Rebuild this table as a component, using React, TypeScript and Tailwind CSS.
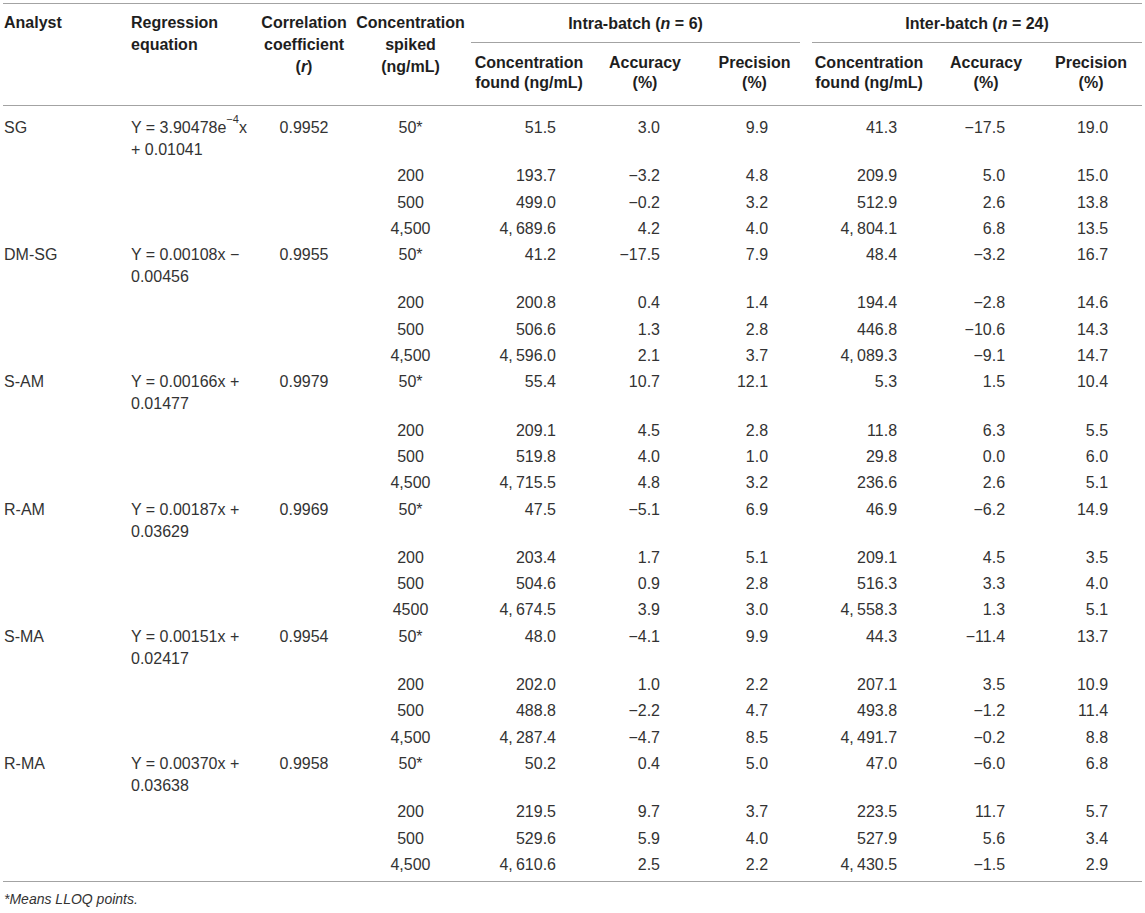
const rows = [
  {
    analyst: 'SG',
    eq: (
      <>
        Y = 3.90478e<sup className="text-[11px] align-[5px] leading-none">−4</sup>x
        <br />+ 0.01041
      </>
    ),
    r: '0.9952',
    data: [
      ['50*', '51.5', '3.0', '9.9', '41.3', '−17.5', '19.0'],
      ['200', '193.7', '−3.2', '4.8', '209.9', '5.0', '15.0'],
      ['500', '499.0', '−0.2', '3.2', '512.9', '2.6', '13.8'],
      ['4,500', '4,\u2009689.6', '4.2', '4.0', '4,\u2009804.1', '6.8', '13.5'],
    ],
  },
  {
    analyst: 'DM-SG',
    eq: (
      <>
        Y = 0.00108x −<br />
        0.00456
      </>
    ),
    r: '0.9955',
    data: [
      ['50*', '41.2', '−17.5', '7.9', '48.4', '−3.2', '16.7'],
      ['200', '200.8', '0.4', '1.4', '194.4', '−2.8', '14.6'],
      ['500', '506.6', '1.3', '2.8', '446.8', '−10.6', '14.3'],
      ['4,500', '4,\u2009596.0', '2.1', '3.7', '4,\u2009089.3', '−9.1', '14.7'],
    ],
  },
  {
    analyst: 'S-AM',
    eq: (
      <>
        Y = 0.00166x +<br />
        0.01477
      </>
    ),
    r: '0.9979',
    data: [
      ['50*', '55.4', '10.7', '12.1', '5.3', '1.5', '10.4'],
      ['200', '209.1', '4.5', '2.8', '11.8', '6.3', '5.5'],
      ['500', '519.8', '4.0', '1.0', '29.8', '0.0', '6.0'],
      ['4,500', '4,\u2009715.5', '4.8', '3.2', '236.6', '2.6', '5.1'],
    ],
  },
  {
    analyst: 'R-AM',
    eq: (
      <>
        Y = 0.00187x +<br />
        0.03629
      </>
    ),
    r: '0.9969',
    data: [
      ['50*', '47.5', '−5.1', '6.9', '46.9', '−6.2', '14.9'],
      ['200', '203.4', '1.7', '5.1', '209.1', '4.5', '3.5'],
      ['500', '504.6', '0.9', '2.8', '516.3', '3.3', '4.0'],
      ['4500', '4,\u2009674.5', '3.9', '3.0', '4,\u2009558.3', '1.3', '5.1'],
    ],
  },
  {
    analyst: 'S-MA',
    eq: (
      <>
        Y = 0.00151x +<br />
        0.02417
      </>
    ),
    r: '0.9954',
    data: [
      ['50*', '48.0', '−4.1', '9.9', '44.3', '−11.4', '13.7'],
      ['200', '202.0', '1.0', '2.2', '207.1', '3.5', '10.9'],
      ['500', '488.8', '−2.2', '4.7', '493.8', '−1.2', '11.4'],
      ['4,500', '4,\u2009287.4', '−4.7', '8.5', '4,\u2009491.7', '−0.2', '8.8'],
    ],
  },
  {
    analyst: 'R-MA',
    eq: (
      <>
        Y = 0.00370x +<br />
        0.03638
      </>
    ),
    r: '0.9958',
    data: [
      ['50*', '50.2', '0.4', '5.0', '47.0', '−6.0', '6.8'],
      ['200', '219.5', '9.7', '3.7', '223.5', '11.7', '5.7'],
      ['500', '529.6', '5.9', '4.0', '527.9', '5.6', '3.4'],
      ['4,500', '4,\u2009610.6', '2.5', '2.2', '4,\u2009430.5', '−1.5', '2.9'],
    ],
  },
];

// right padding of the six numeric columns, so the figures land where the reference has them
const numPad = ['pr-[31px]', 'pr-[43px]', 'pr-[38px]', 'pr-[35px]', 'pr-[35px]', 'pr-[34px]'];

function HeaderCell({ children, align = 'text-center' }: { children: React.ReactNode; align?: string }) {
  return (
    <th rowSpan={2} className={`${align} align-top p-0 pt-[8px] font-bold leading-[22px] border-b border-[#a3a3a3]`}>
      {children}
    </th>
  );
}

function SubHeader({ children }: { children: React.ReactNode }) {
  return (
    <th className="text-center align-top p-0 pt-[10px] pb-[12px] font-bold leading-[20px] border-b border-[#a3a3a3]">
      {children}
    </th>
  );
}

export default function App() {
  return (
    <div className="bg-white w-[1145px] min-h-[913px] pt-[3px] pl-[3px] text-[16px] text-[#333] font-['Liberation_Sans',Arial,sans-serif]">
      <table className="table-fixed border-collapse w-[1139px]">
        <colgroup>
          <col className="w-[128px]" />
          <col className="w-[127px]" />
          <col className="w-[92px]" />
          <col className="w-[121px]" />
          <col className="w-[116px]" />
          <col className="w-[116px]" />
          <col className="w-[103px]" />
          <col className="w-[126px]" />
          <col className="w-[108px]" />
          <col className="w-[102px]" />
        </colgroup>
        <thead className="text-[#1e1e1e]">
          <tr className="border-t border-[#a3a3a3]">
            <HeaderCell align="text-left pl-[1px]">Analyst</HeaderCell>
            <HeaderCell align="text-left">
              Regression
              <br />
              equation
            </HeaderCell>
            <HeaderCell>
              Correlation
              <br />
              coefficient
              <br />(<i>r</i>)
            </HeaderCell>
            <HeaderCell>
              Concentration
              <br />
              spiked
              <br />
              (ng/mL)
            </HeaderCell>
            <th colSpan={3} className="p-0 align-top font-bold">
              <div className="mr-[6px] pt-[9px] pb-[7px] leading-[22px] text-center border-b border-[#a3a3a3]">
                Intra-batch (<i>n</i> = 6)
              </div>
            </th>
            <th colSpan={3} className="p-0 align-top font-bold">
              <div className="ml-[6px] pt-[9px] pb-[7px] leading-[22px] text-center border-b border-[#a3a3a3]">
                Inter-batch (<i>n</i> = 24)
              </div>
            </th>
          </tr>
          <tr>
            <SubHeader>
              Concentration
              <br />
              found (ng/mL)
            </SubHeader>
            <SubHeader>
              Accuracy
              <br />
              (%)
            </SubHeader>
            <SubHeader>
              Precision
              <br />
              (%)
            </SubHeader>
            <SubHeader>
              Concentration
              <br />
              found (ng/mL)
            </SubHeader>
            <SubHeader>
              Accuracy
              <br />
              (%)
            </SubHeader>
            <SubHeader>
              Precision
              <br />
              (%)
            </SubHeader>
          </tr>
        </thead>
        <tbody className="leading-[22px]">
          {rows.map((block, bi) =>
            block.data.map((d, ri) => {
              const first = bi === 0 && ri === 0;
              const last = bi === rows.length - 1 && ri === 3;
              const pad = `${first ? 'pt-[11px]' : 'pt-[2px]'} ${last ? 'pb-[5px]' : 'pb-[2.3px]'}`;
              return (
                <tr key={`${bi}-${ri}`} className={last ? 'border-b border-[#a3a3a3]' : ''}>
                  <td className={`p-0 pl-[1px] align-top ${pad}`}>{ri === 0 ? block.analyst : ''}</td>
                  <td className={`p-0 align-top whitespace-nowrap ${pad}`}>{ri === 0 ? block.eq : ''}</td>
                  <td className={`p-0 align-top text-center ${pad}`}>{ri === 0 ? block.r : ''}</td>
                  <td className={`p-0 align-top text-center ${pad}`}>{d[0]}</td>
                  {d.slice(1).map((v, ci) => (
                    <td key={ci} className={`p-0 align-top text-right whitespace-nowrap ${numPad[ci]} ${pad}`}>
                      {v}
                    </td>
                  ))}
                </tr>
              );
            })
          )}
        </tbody>
      </table>
      <p className="mt-[8px] pl-[1px] text-[14px] leading-[18px] italic text-[#333]">*Means LLOQ points.</p>
    </div>
  );
}
